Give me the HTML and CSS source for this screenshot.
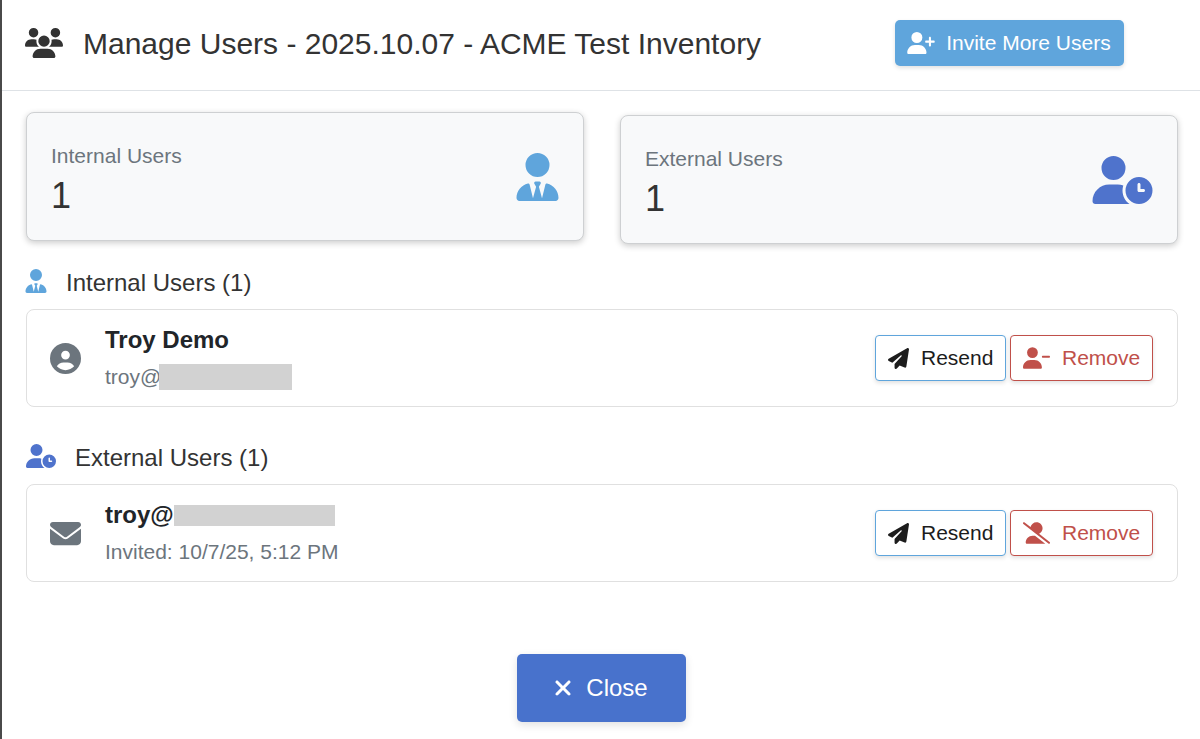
FILE: index.html
```html
<!DOCTYPE html>
<html lang="en">
<head>
    <meta charset="UTF-8">
    <title>Manage Users</title>
    <link rel="stylesheet" href="styles.css">
</head>
<body>
    <div class="modal">
        <header class="modal-header">
            <svg class="icon-users" viewBox="0 0 640 512" preserveAspectRatio="none"><path d="M144 0a80 80 0 1 1 0 160A80 80 0 1 1 144 0zM512 0a80 80 0 1 1 0 160A80 80 0 1 1 512 0zM0 298.7C0 239.8 47.8 192 106.7 192h42.7c15.9 0 31 3.5 44.6 9.7c-1.3 7.2-1.9 14.7-1.9 22.3c0 38.2 16.8 72.5 43.3 96c-.2 0-.4 0-.7 0H21.3C9.6 320 0 310.4 0 298.7zM405.3 320c-.2 0-.4 0-.7 0c26.6-23.5 43.3-57.8 43.3-96c0-7.6-.7-15-1.9-22.3c13.6-6.3 28.7-9.7 44.6-9.7h42.7C592.2 192 640 239.8 640 298.7c0 11.8-9.6 21.3-21.3 21.3H405.3zM224 224a96 96 0 1 1 192 0 96 96 0 1 1 -192 0zM128 485.3C128 411.7 187.7 352 261.3 352H378.7C452.3 352 512 411.7 512 485.3c0 14.7-11.9 26.7-26.7 26.7H154.7c-14.7 0-26.7-11.9-26.7-26.7z"/></svg>
            <h1 class="modal-title">Manage Users - 2025.10.07 - ACME Test Inventory</h1>
            <button class="btn-invite">
                <svg class="icon-invite" viewBox="0 0 640 512"><path d="M96 128a128 128 0 1 1 256 0A128 128 0 1 1 96 128zM0 482.3C0 383.8 79.8 304 178.3 304h91.4C368.2 304 448 383.8 448 482.3c0 16.4-13.3 29.7-29.7 29.7H29.7C13.3 512 0 498.7 0 482.3zM504 312V248H440c-13.3 0-24-10.7-24-24s10.7-24 24-24h64V136c0-13.3 10.7-24 24-24s24 10.7 24 24v64h64c13.3 0 24 10.7 24 24s-10.7 24-24 24H552v64c0 13.3-10.7 24-24 24s-24-10.7-24-24z"/></svg>
                Invite More Users
            </button>
        </header>

        <main class="modal-body">
            <div class="stats">
                <div class="stat-card">
                    <div class="stat-text">
                        <div class="stat-label">Internal Users</div>
                        <div class="stat-value">1</div>
                    </div>
                    <svg class="stat-icon-tie" viewBox="0 0 448 512"><path d="M96 128a128 128 0 1 0 256 0A128 128 0 1 0 96 128zm94.5 200.2l18.6 31L175.8 483.1l-36-146.9c-2-8.1-9.8-13.4-17.9-11.3C51.9 342.4 0 405.8 0 481.3c0 17 13.8 30.7 30.7 30.7H162.5c0 0 0 0 .1 0H168 280h5.5c0 0 0 0 .1 0H417.3c17 0 30.7-13.8 30.7-30.7c0-75.5-51.9-138.9-121.9-156.4c-8.1-2-15.9 3.3-17.9 11.3l-36 146.9L238.9 359.2l18.6-31c6.4-10.7-1.3-24.2-13.7-24.2H224 204.3c-12.4 0-20.1 13.6-13.7 24.2z"/></svg>
                </div>
                <div class="stat-card stat-card-external">
                    <div class="stat-text">
                        <div class="stat-label">External Users</div>
                        <div class="stat-value">1</div>
                    </div>
                    <svg class="stat-icon-clock" viewBox="0 0 640 512"><path d="M224 0a128 128 0 1 1 0 256A128 128 0 1 1 224 0zM178.3 304h91.4c20.6 0 40.4 3.5 58.8 9.9C323 331 320 349.1 320 368c0 59.5 29.5 112.1 74.8 144H29.7C13.3 512 0 498.7 0 482.3C0 383.8 79.8 304 178.3 304zM640 368a144 144 0 1 1 -288 0 144 144 0 1 1 288 0zM496 288c-8.8 0-16 7.2-16 16v64c0 8.8 7.2 16 16 16h48c8.8 0 16-7.2 16-16s-7.2-16-16-16H512V304c0-8.8-7.2-16-16-16z"/></svg>
                </div>
            </div>

            <h2 class="section-title section-internal">
                <svg class="section-icon-tie" viewBox="0 0 448 512"><path d="M96 128a128 128 0 1 0 256 0A128 128 0 1 0 96 128zm94.5 200.2l18.6 31L175.8 483.1l-36-146.9c-2-8.1-9.8-13.4-17.9-11.3C51.9 342.4 0 405.8 0 481.3c0 17 13.8 30.7 30.7 30.7H162.5c0 0 0 0 .1 0H168 280h5.5c0 0 0 0 .1 0H417.3c17 0 30.7-13.8 30.7-30.7c0-75.5-51.9-138.9-121.9-156.4c-8.1-2-15.9 3.3-17.9 11.3l-36 146.9L238.9 359.2l18.6-31c6.4-10.7-1.3-24.2-13.7-24.2H224 204.3c-12.4 0-20.1 13.6-13.7 24.2z"/></svg>
                <span class="section-text">Internal Users (1)</span>
            </h2>
            <div class="user-card">
                <svg class="user-icon" viewBox="0 0 512 512"><path d="M399 384.2C376.9 345.8 335.4 320 288 320H224c-47.4 0-88.9 25.8-111 64.2c35.2 39.2 86.2 63.8 143 63.8s107.8-24.7 143-63.8zM0 256a256 256 0 1 1 512 0A256 256 0 1 1 0 256zm256 16a72 72 0 1 0 0-144 72 72 0 1 0 0 144z"/></svg>
                <div class="user-info">
                    <div class="user-name">Troy Demo</div>
                    <div class="user-sub">troy@<span class="redact redact-sub"></span></div>
                </div>
                <div class="user-actions">
                    <button class="btn-resend">
                        <svg class="icon-plane" viewBox="0 0 512 512"><path d="M498.1 5.6c10.1 7 15.4 19.1 13.5 31.2l-64 416c-1.5 9.7-7.4 18.2-16 23s-18.9 5.4-28 1.6L284 427.7l-68.5 74.1c-8.9 9.7-22.9 12.9-35.2 8.1S160 493.2 160 480V396.4c0-4 1.5-7.8 4.2-10.7L331.8 202.8c5.8-6.3 5.6-16-.4-22s-15.7-6.4-22-.7L106 360.8 17.7 316.6C7.1 311.3 .3 300.7 0 288.9s5.9-22.8 16.1-28.7l448-256c10.7-6.1 23.9-5.5 34 1.4z"/></svg>
                        Resend
                    </button>
                    <button class="btn-remove">
                        <svg class="icon-remove" viewBox="0 0 640 512"><path d="M96 128a128 128 0 1 1 256 0A128 128 0 1 1 96 128zM0 482.3C0 383.8 79.8 304 178.3 304h91.4C368.2 304 448 383.8 448 482.3c0 16.4-13.3 29.7-29.7 29.7H29.7C13.3 512 0 498.7 0 482.3zM472 200H616c13.3 0 24 10.7 24 24s-10.7 24-24 24H472c-13.3 0-24-10.7-24-24s10.7-24 24-24z"/></svg>
                        Remove
                    </button>
                </div>
            </div>

            <h2 class="section-title section-external">
                <svg class="section-icon-clock" viewBox="0 0 640 512"><path d="M224 0a128 128 0 1 1 0 256A128 128 0 1 1 224 0zM178.3 304h91.4c20.6 0 40.4 3.5 58.8 9.9C323 331 320 349.1 320 368c0 59.5 29.5 112.1 74.8 144H29.7C13.3 512 0 498.7 0 482.3C0 383.8 79.8 304 178.3 304zM640 368a144 144 0 1 1 -288 0 144 144 0 1 1 288 0zM496 288c-8.8 0-16 7.2-16 16v64c0 8.8 7.2 16 16 16h48c8.8 0 16-7.2 16-16s-7.2-16-16-16H512V304c0-8.8-7.2-16-16-16z"/></svg>
                <span class="section-text">External Users (1)</span>
            </h2>
            <div class="user-card">
                <svg class="user-icon" viewBox="0 0 512 512"><path d="M48 64C21.5 64 0 85.5 0 112c0 15.1 7.1 29.3 19.2 38.4L236.8 313.6c11.4 8.5 27 8.5 38.4 0L492.8 150.4c12.1-9.1 19.2-23.3 19.2-38.4c0-26.5-21.5-48-48-48H48zM0 176V384c0 35.3 28.7 64 64 64H448c35.3 0 64-28.7 64-64V176L294.4 339.2c-22.8 17.1-54 17.1-76.8 0L0 176z"/></svg>
                <div class="user-info">
                    <div class="user-name">troy@<span class="redact redact-name"></span></div>
                    <div class="user-sub">Invited: 10/7/25, 5:12 PM</div>
                </div>
                <div class="user-actions">
                    <button class="btn-resend">
                        <svg class="icon-plane" viewBox="0 0 512 512"><path d="M498.1 5.6c10.1 7 15.4 19.1 13.5 31.2l-64 416c-1.5 9.7-7.4 18.2-16 23s-18.9 5.4-28 1.6L284 427.7l-68.5 74.1c-8.9 9.7-22.9 12.9-35.2 8.1S160 493.2 160 480V396.4c0-4 1.5-7.8 4.2-10.7L331.8 202.8c5.8-6.3 5.6-16-.4-22s-15.7-6.4-22-.7L106 360.8 17.7 316.6C7.1 311.3 .3 300.7 0 288.9s5.9-22.8 16.1-28.7l448-256c10.7-6.1 23.9-5.5 34 1.4z"/></svg>
                        Resend
                    </button>
                    <button class="btn-remove">
                        <svg class="icon-remove" viewBox="0 0 640 512"><path d="M38.8 5.1C28.4-3.1 13.3-1.2 5.1 9.2S-1.2 34.7 9.2 42.9l592 464c10.4 8.2 25.5 6.3 33.7-4.1s6.3-25.5-4.1-33.7L381.9 274c48.5-23.2 82.1-72.7 82.1-130C464 64.5 399.5 0 320 0C250.4 0 192.4 49.3 178.9 114.9L38.8 5.1zM545.5 512H528L284.3 320h-59C136.2 320 64 392.2 64 481.3c0 17 13.8 30.7 30.7 30.7H545.3l.3 0z"/></svg>
                        Remove
                    </button>
                </div>
            </div>

            <div class="modal-footer">
                <button class="btn-close">
                    <svg class="icon-close" viewBox="0 0 384 512"><path d="M342.6 150.6c12.5-12.5 12.5-32.8 0-45.3s-32.8-12.5-45.3 0L192 210.7 86.6 105.4c-12.5-12.5-32.8-12.5-45.3 0s-12.5 32.8 0 45.3L146.7 256 41.4 361.4c-12.5 12.5-12.5 32.8 0 45.3s32.8 12.5 45.3 0L192 301.3 297.4 406.6c12.5 12.5 32.8 12.5 45.3 0s12.5-32.8 0-45.3L237.3 256 342.6 150.6z"/></svg>
                    Close
                </button>
            </div>
        </main>
    </div>
</body>
</html>
```

FILE: styles.css
```css
* {
    box-sizing: border-box;
}

html, body {
    height: 100%;
}

body {
    margin: 0;
    font-family: "Liberation Sans", Arial, sans-serif;
    color: #212529;
    background-color: #FFFFFF;
    overflow: hidden;
}

svg {
    fill: currentColor;
    flex-shrink: 0;
}

button {
    font-family: inherit;
    display: flex;
    align-items: center;
    cursor: pointer;
}

.modal {
    height: 100%;
    border-left: 2px solid #4A4A4A;
}

.modal-header {
    display: flex;
    align-items: center;
    height: 91px;
    padding: 0 0 4px 23px;
    border-bottom: 1px solid #DEE2E6;
}

.icon-users {
    width: 38px;
    height: 30px;
    color: #333333;
    margin-right: 20px;
}

.modal-title {
    margin: 2px 0 0;
    font-size: 30px;
    font-weight: 400;
    line-height: 36px;
    color: #333333;
}

.btn-invite {
    margin-left: 134px;
    width: 229px;
    height: 46px;
    padding: 0 0 0 12px;
    background-color: #5FA5DC;
    color: #FFFFFF;
    border: none;
    border-radius: 5px;
    font-size: 21px;
    box-shadow: 0 2px 4px rgba(0, 0, 0, 0.12);
}

.icon-invite {
    width: 28px;
    height: 22px;
    margin-right: 11px;
}

.modal-body {
    padding: 21px 22px 0 24px;
}

.stats {
    display: grid;
    grid-template-columns: 558px 558px;
    column-gap: 36px;
    align-items: start;
}

.stat-card {
    display: flex;
    align-items: center;
    justify-content: space-between;
    height: 129px;
    padding: 0 24px;
    background-color: #F8F9FA;
    border: 1px solid #CED0D2;
    border-radius: 8px;
    box-shadow: 0 2px 6px rgba(0, 0, 0, 0.2);
}

.stat-card-external {
    margin-top: 3px;
}

.stat-text {
    margin-top: 6px;
}

.stat-label {
    font-size: 21px;
    line-height: 26px;
    color: #6C757D;
}

.stat-value {
    margin-top: 6px;
    font-size: 36px;
    line-height: 42px;
    color: #333333;
}

.stat-icon-tie {
    width: 43px;
    height: 48px;
    color: #5FA5DC;
}

.stat-icon-clock {
    width: 61px;
    height: 48px;
    color: #4F73CC;
}

.section-title {
    display: flex;
    align-items: center;
    margin: 0;
    height: 24px;
    font-size: 24px;
    font-weight: 400;
    color: #333333;
}

.section-text {
    margin-top: 3px;
}

.section-internal {
    margin-top: 25px;
    margin-left: -1px;
    margin-bottom: 16px;
}

.section-external {
    margin-top: 37px;
    margin-bottom: 16px;
}

.section-icon-tie {
    width: 22px;
    height: 24px;
    margin-right: 19px;
    color: #5FA5DC;
}

.section-icon-clock {
    width: 30px;
    height: 24px;
    margin-right: 19px;
    color: #4F73CC;
}

.user-card {
    display: flex;
    align-items: center;
    height: 98px;
    padding: 0 24px 0 23px;
    border: 1px solid #E0E0E0;
    border-radius: 8px;
}

.user-icon {
    width: 31px;
    height: 31px;
    color: #6C757D;
    margin-right: 24px;
}

.user-info {
    flex: 1;
    padding-bottom: 1px;
}

.user-name {
    display: flex;
    align-items: center;
    font-size: 24px;
    font-weight: 700;
    line-height: 30px;
}

.user-sub {
    display: flex;
    align-items: center;
    margin-top: 9px;
    font-size: 21px;
    line-height: 26px;
    color: #6C757D;
}

.redact {
    display: block;
    background-color: #D2D2D2;
}

.redact-sub {
    width: 133px;
    height: 26px;
    margin-left: -2px;
}

.redact-name {
    width: 161px;
    height: 21px;
}

.user-actions {
    display: flex;
    gap: 4px;
}

.btn-resend, .btn-remove {
    height: 46px;
    background-color: #FFFFFF;
    border-radius: 4px;
    font-size: 21px;
    box-shadow: 0 2px 4px rgba(0, 0, 0, 0.12);
}

.btn-resend {
    width: 131px;
    padding: 0 0 0 12px;
    border: 1px solid #5FA5DC;
    color: #1C1C1C;
}

.btn-remove {
    width: 143px;
    padding: 0 0 0 12px;
    border: 1px solid #C0504A;
    color: #C0504A;
}

.icon-plane {
    width: 21px;
    height: 21px;
    margin-right: 12px;
}

.icon-remove {
    width: 27px;
    height: 22px;
    margin-right: 12px;
}

.modal-footer {
    display: flex;
    justify-content: center;
    margin-top: 72px;
    padding-right: 2px;
}

.btn-close {
    justify-content: center;
    width: 169px;
    height: 68px;
    background-color: #4872CC;
    color: #FFFFFF;
    border: none;
    border-radius: 5px;
    font-size: 24px;
    box-shadow: 0 3px 8px rgba(0, 0, 0, 0.12);
}

.icon-close {
    width: 18px;
    height: 24px;
    margin-right: 14px;
}
```
